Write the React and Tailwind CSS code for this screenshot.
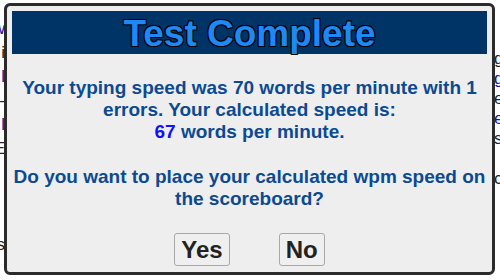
import React from 'react';

const leftBits = [
  { t: 'w', c: 'text-[#1a0dab]' },
  { t: 'i', c: 'text-[#222]' },
  { t: 'l', c: 'text-[#1a0dab]' },
  { t: '-', c: 'text-[#222]' },
  { t: 'l', c: 'text-[#1a0dab]' },
  { t: 'E', c: 'text-[#222]' },
  { t: '', c: '' },
  { t: '', c: '' },
  { t: '', c: '' },
  { t: 's', c: 'text-[#222]' },
];

const rightBits = [
  { t: 'g', c: 'text-[#222]' },
  { t: 'g', c: 'text-[#1a0dab]' },
  { t: 'e', c: 'text-[#222]' },
  { t: 'e', c: 'text-[#1a0dab]' },
  { t: 's', c: 'text-[#222]' },
  { t: '', c: '' },
  { t: 'c', c: 'text-[#222]' },
];

export default function App() {
  return (
    <div className="relative w-[500px] h-[280px] bg-white overflow-hidden font-['Liberation_Sans',Arial,sans-serif]">
      {/* page text behind the dialog */}
      <div className="flex justify-between h-full text-[17px] leading-[21px]">
        <div className="w-[5px] overflow-hidden flex flex-col items-end pt-[18px]">
          {leftBits.map((b, i) => (
            <div key={i} className={`h-[24px] ${b.c}`}>{b.t}</div>
          ))}
        </div>
        <div className="w-[6px] overflow-hidden flex flex-col pt-[48px]">
          {rightBits.map((b, i) => (
            <div key={i} className={`h-[20px] ${b.c}`}>{b.t}</div>
          ))}
        </div>
      </div>

      {/* dialog */}
      <div className="absolute left-[4px] top-[3px] w-[491px] h-[272px] border-[3px] border-[#2b2b2b] rounded-[6px] bg-[#eeeeee] px-[5px] pt-[5px] flex flex-col">
        <div className="h-[43px] bg-[#003366] flex items-center justify-center">
          <h1 className="text-[37px] font-bold leading-none pt-[2px] text-[#1e88f5] [text-shadow:-1px_-1px_0_#000,1px_-1px_0_#000,-1px_1px_0_#000,1px_1px_0_#000]">
            Test Complete
          </h1>
        </div>
        <div className="text-[19px] font-bold leading-[22px] text-[#0b4a92] text-center">
          <p className="mt-[23px]">
            Your typing speed was 70 words per minute with 1 errors. Your calculated speed is:
            <br />
            <span className="text-[#1010ff]">67</span> words per minute.
          </p>
          <p className="mt-[23px]">
            Do you want to place your calculated wpm speed on the scoreboard?
          </p>
        </div>
        <div className="mt-[23px] flex justify-center gap-[49px]">
          <button className="h-[33px] px-[6px] border border-[#a8a8a8] rounded-[3px] bg-[#efefef] text-[24px] font-bold text-[#222] leading-none">
            Yes
          </button>
          <button className="h-[33px] px-[6px] border border-[#a8a8a8] rounded-[3px] bg-[#efefef] text-[24px] font-bold text-[#222] leading-none">
            No
          </button>
        </div>
      </div>
    </div>
  );
}
